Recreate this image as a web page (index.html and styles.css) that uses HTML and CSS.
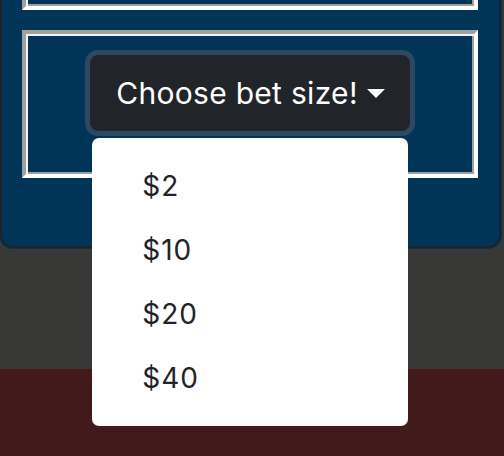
FILE: index.html
```html
<!DOCTYPE html>
<html lang="en">
<head>
<meta charset="utf-8">
<title>Bet</title>
<link rel="stylesheet" href="styles.css">
</head>
<body>
<div class="panel">
  <div class="box box-top"></div>
  <div class="box box-bet">
    <div class="dropdown">
      <button class="btn-dark" type="button">Choose bet size!<span class="caret"></span></button>
      <ul class="menu">
        <li class="item">$2</li>
        <li class="item">$10</li>
        <li class="item">$20</li>
        <li class="item">$40</li>
      </ul>
    </div>
  </div>
</div>
<div class="band-gray"></div>
<div class="band-red"></div>
</body>
</html>
```
FILE: styles.css
```css
html, body {
  margin: 0;
  padding: 0;
}
body {
  background: #383836;
  font-family: Inter, "Noto Sans", sans-serif;
  overflow: hidden;
  height: 456px;
}
.panel {
  width: 501px;
  box-sizing: border-box;
  margin-top: -50px;
  padding: 0 21px 68px 20px;
  background: #003558;
  border: 2px solid #1e2328;
  border-top: none;
  border-radius: 0 0 13px 13px;
  box-shadow: 0 0 0 1px #003558;
  display: flex;
  flex-direction: column;
  gap: 20px;
}
.box {
  box-sizing: border-box;
  border-style: solid;
  border-width: 4px;
  border-color: #a0a0a0 #ffffff #ffffff #a0a0a0;
  box-shadow: inset 2px 2px 0 #f4f4f4, inset -2px -2px 0 #a0a0a0;
}
.box-top {
  height: 60px;
}
.box-bet {
  height: 148px;
  display: flex;
  justify-content: center;
  align-items: flex-start;
  padding-top: 21px;
}
.dropdown {
  position: relative;
}
.btn-dark {
  box-sizing: border-box;
  height: 76px;
  padding: 0 24px 0 25px;
  background: #212529;
  color: #ffffff;
  border: 1px solid #212529;
  border-radius: 8px;
  box-shadow: 0 0 0 5px #2b4a61;
  font-family: inherit;
  font-size: 30px;
  letter-spacing: 0.3px;
  line-height: 45px;
  display: flex;
  align-items: center;
  white-space: nowrap;
}
.caret {
  display: inline-block;
  width: 0;
  height: 0;
  margin-left: 9px;
  border-top: 9px solid #ffffff;
  border-left: 9px solid transparent;
  border-right: 9px solid transparent;
}
.menu {
  position: absolute;
  top: 83px;
  left: 2px;
  width: 316px;
  box-sizing: border-box;
  margin: 0;
  padding: 16px 0;
  list-style: none;
  background: #ffffff;
  border-radius: 7px;
  z-index: 5;
}
.item {
  height: 64px;
  display: flex;
  align-items: center;
  padding-left: 50px;
  font-size: 28px;
  letter-spacing: 1px;
  color: #212529;
}
.band-gray {
  height: 120px;
  margin-top: 1px;
}
.band-red {
  height: 100px;
  background: #431a1b;
}
```
